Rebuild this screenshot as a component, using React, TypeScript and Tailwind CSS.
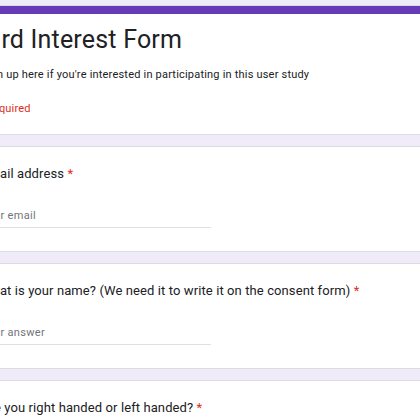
const CARD = "bg-white border border-[#dadce0] rounded-[6px]";

function Question({ title, placeholder }: { title: string; placeholder?: string }) {
  return (
    <div className={`${CARD} h-[106px] pt-[18px]`}>
      <div className="font-['Roboto',sans-serif] text-[13px] leading-[18px] text-[#202124] tracking-[0.1px]">
        {title} <span className="text-[#d93025]">*</span>
      </div>
      {placeholder && (
        <div className="mt-[25px] w-[230px] border-b border-[#e0e0e0] pb-[3px] font-['Roboto',sans-serif] text-[11px] leading-[16px] tracking-[0.3px] text-[#70757a]">
          {placeholder}
        </div>
      )}
    </div>
  );
}

export default function App() {
  return (
    <div className="h-[420px] w-[420px] overflow-hidden bg-[#f0ebf8] pt-[5px]">
      <div className="-ml-[20px] flex w-[446px] flex-col gap-[11px]">
        <div className={`${CARD} h-[130px] overflow-hidden`}>
          <div className="h-[8px] bg-[#673ab7]" />
          <div className="pt-[10px]">
            <h1 className="-ml-[63px] font-['Roboto',sans-serif] text-[25px] leading-[32px] tracking-[0.2px] text-[#202124]">
              Keyboard Interest Form
            </h1>
            <p className="mt-[11px] font-['Roboto',sans-serif] text-[11px] leading-[16px] tracking-[0.2px] text-[#202124]">
              Sign up here if you're interested in participating in this user study
            </p>
            <p className="-ml-[3px] mt-[18px] font-['Roboto',sans-serif] text-[11px] leading-[16px] tracking-[0.2px] text-[#d93025]">
              * Required
            </p>
          </div>
        </div>
        <Question title="Email address" placeholder="Your email" />
        <Question
          title="What is your name? (We need it to write it on the consent form)"
          placeholder="Your answer"
        />
        <Question title="Are you right handed or left handed?" />
      </div>
    </div>
  );
}
